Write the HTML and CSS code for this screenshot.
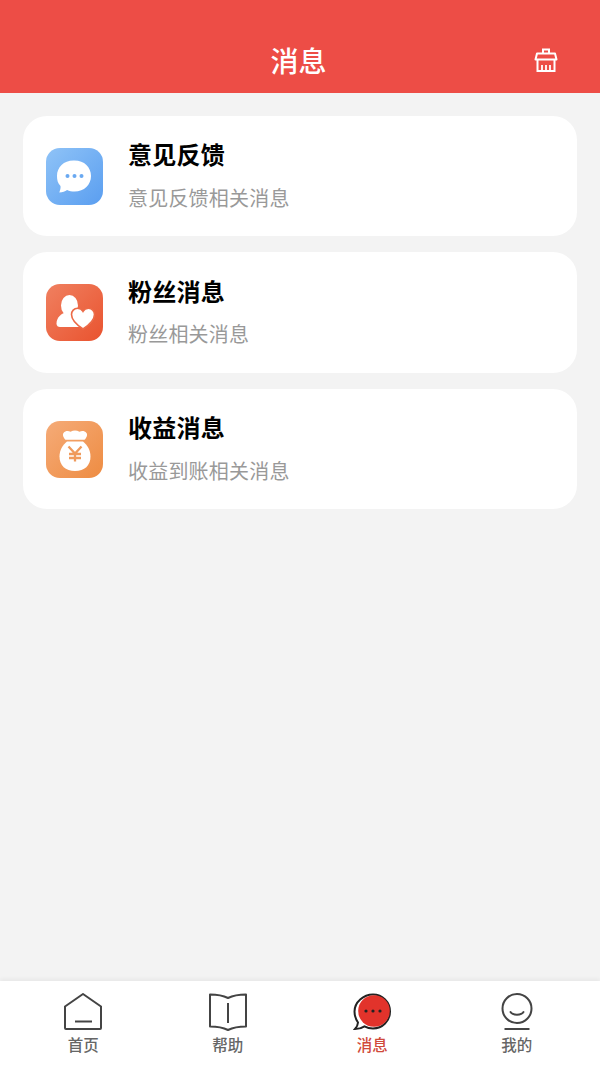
FILE: index.html
```html
<!DOCTYPE html>
<html lang="zh-CN">
<head>
<meta charset="utf-8">
<title>消息</title>
<link rel="stylesheet" href="styles.css">
</head>
<body>
<div class="page">
  <header class="header">
    <h1 class="header-title">消息</h1>
    <svg class="clean-icon" viewBox="0 0 24 24" fill="none" stroke="#fff" stroke-width="2">
      <path d="M9 5V1.500h6V5"/>
      <path d="M1.500 11.500 3 5.500h18l1.500 6z" stroke-linejoin="round"/>
      <path d="M3.500 11.500v11.500h17V11.500"/>
      <path d="M8 22v-5M12 22v-5M16 22v-5" stroke-width="1.800"/>
    </svg>
  </header>
  <main class="list">
    <section class="card">
      <div class="tile tile-blue">
        <svg viewBox="0 0 57 57" class="tile-svg">
          <path fill="#fff" d="M28.500 12.500c9.800 0 16.500 6.800 16.500 15.500s-6.700 15.500-16.500 15.500c-2.700 0-5.200-.5-7.400-1.500-2.100 1.400-4.400 2.200-7.800 2.500.8-2.200 1.500-4.300 1.200-6.500-2.800-2.700-3.500-6-3.500-10 0-8.700 6.700-15.500 16.500-15.500z"/>
          <circle cx="21.500" cy="28" r="2" fill="#6aa9f1"/>
          <circle cx="28.500" cy="28" r="2" fill="#6aa9f1"/>
          <circle cx="35.500" cy="28" r="2" fill="#6aa9f1"/>
        </svg>
      </div>
      <div class="card-text">
        <div class="card-title">意见反馈</div>
        <div class="card-sub">意见反馈相关消息</div>
      </div>
    </section>
    <section class="card">
      <div class="tile tile-red">
        <svg viewBox="0 0 57 57" class="tile-svg">
          <ellipse cx="23.500" cy="21.500" rx="8.500" ry="10.500" fill="#fff"/>
          <path fill="#fff" d="M18 29c-4.500 2-7.500 6-7.500 10.500 0 2.500 1.500 3.500 3.500 3.500h20c2 0 3.500-1 3.500-3.500 0-4.500-3-8.500-7.500-10.500z"/>
          <path fill="#fff" stroke="#ec6a47" stroke-width="1.600" d="M37 45C29.500 40 25.500 36 25.500 30.500c0-3.500 2.500-6.200 6-6.200 2.500 0 4.500 1.200 5.500 3 1-1.800 3-3 5.500-3 3.500 0 6 2.700 6 6.200 0 5.500-4 9.500-11.500 14.500z"/>
        </svg>
      </div>
      <div class="card-text">
        <div class="card-title">粉丝消息</div>
        <div class="card-sub">粉丝相关消息</div>
      </div>
    </section>
    <section class="card">
      <div class="tile tile-orange">
        <svg viewBox="0 0 57 57" class="tile-svg">
          <path fill="#fff" d="M17.500 12c2-2.500 5-2.300 7-1.200 3-1.800 6-1.800 9 0 2-1.100 5-1.300 7 1.200 1.500 2-.5 5.500-2 6.700H19.500c-1.500-1.200-3.500-4.700-2-6.700z"/>
          <path fill="#fff" d="M21 20.500h16c4.500 3.500 7.500 9 7.500 15 0 9-6 14.500-15.500 14.500S13.500 44.500 13.500 35.500c0-6 3-11.500 7.500-15z"/>
          <path fill="none" stroke="#ef9a5c" stroke-width="2.300" d="M22.500 25.500l6.500 7 6.500-7M29 32.500v8M23 33h12M23 37h12"/>
        </svg>
      </div>
      <div class="card-text">
        <div class="card-title">收益消息</div>
        <div class="card-sub">收益到账相关消息</div>
      </div>
    </section>
  </main>
  <nav class="tabbar">
    <div class="tab">
      <svg class="tab-icon" viewBox="0 0 38 38" fill="none" stroke="#444" stroke-width="2">
        <path d="M1 13.500 19 1l18 12.500V35a1 1 0 0 1-1 1H2a1 1 0 0 1-1-1z" stroke-linejoin="round"/>
        <path d="M11 28.500h17"/>
      </svg>
      <span class="tab-label">首页</span>
    </div>
    <div class="tab">
      <svg class="tab-icon" viewBox="0 0 38 38" fill="none" stroke="#444" stroke-width="2">
        <path d="M1 1.500c7 0 13 1 18 3.500C24 2.500 30 1.500 37 1.500v32c-7 0-13 1-18 3.500C14 34.500 8 33.500 1 33.500z" stroke-linejoin="round"/>
        <path d="M19 10v20"/>
      </svg>
      <span class="tab-label">帮助</span>
    </div>
    <div class="tab">
      <svg class="tab-icon" viewBox="0 0 38 38">
        <path fill="none" stroke="#222" stroke-width="2" d="M20 1.500c9.500 0 17 7.500 17 17s-7.500 17-17 17c-3 0-6-.8-8.500-2.200-2.800 1.800-6 2.700-9.500 2.700 1.800-2 2.800-4 3-6.500-2-3-3.500-6-3.500-11 0-9.500 9-17 18.500-17z"/>
        <circle cx="21" cy="18" r="15.800" fill="#e2332b"/>
        <circle cx="13" cy="18" r="1.600" fill="#222"/>
        <circle cx="20" cy="18" r="1.600" fill="#222"/>
        <circle cx="27" cy="18" r="1.600" fill="#222"/>
      </svg>
      <span class="tab-label tab-label-active">消息</span>
    </div>
    <div class="tab">
      <svg class="tab-icon" viewBox="0 0 38 38" fill="none" stroke="#444" stroke-width="2">
        <circle cx="19" cy="15.500" r="14.500"/>
        <path d="M12.500 19c2 3.500 11 3.500 13 0" stroke-linecap="round"/>
        <path d="M6.500 36h25"/>
      </svg>
      <span class="tab-label">我的</span>
    </div>
  </nav>
</div>
</body>
</html>
```

FILE: styles.css
```css
* {
  box-sizing: border-box;
}

html,
body {
  margin: 0;
  padding: 0;
}

body {
  font-family: "Noto Sans CJK SC", "Liberation Sans", sans-serif;
}

.page {
  width: 600px;
  height: 1067px;
  display: flex;
  flex-direction: column;
  background: #f3f3f3;
  overflow: hidden;
}

.header {
  height: 93px;
  flex: none;
  padding: 48px 42px 0 0;
  display: flex;
  justify-content: flex-end;
  align-items: flex-start;
  background: #ed4d46;
  position: relative;
}

.header-title {
  position: absolute;
  left: 0;
  right: 3px;
  top: 41px;
  margin: 0;
  color: #fff;
  font-size: 28px;
  font-weight: 500;
  line-height: 38px;
  text-align: center;
}

.clean-icon {
  width: 24px;
  height: 24px;
}

.list {
  flex: 1;
  padding: 23px 23px 0;
  display: flex;
  flex-direction: column;
  gap: 16.200px;
}

.card {
  height: 120.300px;
  padding-left: 23px;
  display: flex;
  align-items: center;
  gap: 25px;
  background: #fff;
  border-radius: 24px;
}

.tile {
  width: 57px;
  height: 57px;
  flex: none;
  border-radius: 14px;
}

.tile-svg {
  width: 57px;
  height: 57px;
  display: block;
}

.tile-blue {
  background: linear-gradient(135deg, #8fc3f7, #5a9ef0);
}

.tile-red {
  background: linear-gradient(135deg, #f08060, #e9532f);
}

.tile-orange {
  background: linear-gradient(135deg, #f5ab78, #ee8c42);
}

.card-text {
  display: flex;
  flex-direction: column;
  gap: 9.500px;
  margin-top: -0.500px;
}

.card-title {
  color: #000;
  font-size: 24px;
  font-weight: 700;
  line-height: 34px;
  letter-spacing: 0.250px;
}

.card-sub {
  color: #999;
  font-size: 20px;
  line-height: 34px;
  letter-spacing: 0.200px;
}

.tabbar {
  height: 86px;
  flex: none;
  display: flex;
  padding: 12px 11px 0;
  background: #fff;
  box-shadow: 0 -2px 4px rgba(0, 0, 0, 0.05);
}

.tab {
  width: 144.500px;
  display: flex;
  flex-direction: column;
  align-items: center;
}

.tab-icon {
  width: 38px;
  height: 38px;
  display: block;
}

.tab-label {
  margin-top: 3px;
  color: #666;
  font-size: 15.500px;
  font-weight: 500;
  line-height: 21px;
}

.tab-label-active {
  color: #d0493a;
}
```
